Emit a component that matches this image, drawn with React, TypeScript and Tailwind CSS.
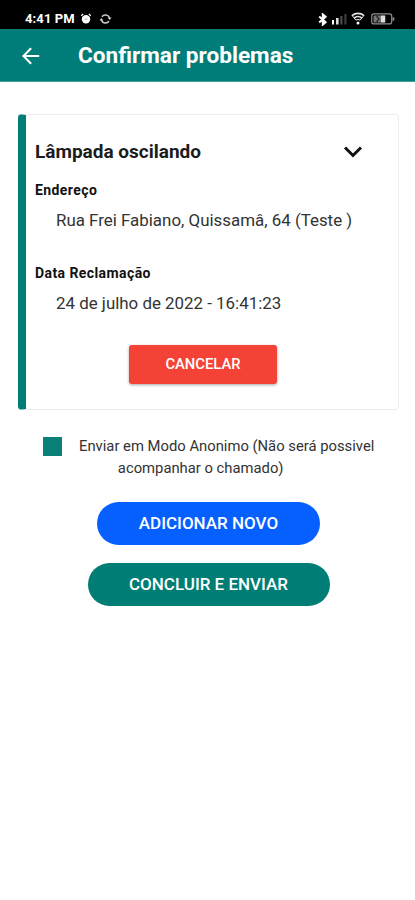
import type { ReactNode } from 'react'

function StatusBar() {
  return (
    <div className="flex h-[29px] items-end justify-between bg-black pr-[20px] pb-[2px] pl-[25px] text-white">
      <div className="flex h-4 items-center">
        <span className="w-[51px] text-[13px] leading-4 font-bold tracking-[0.1px] whitespace-nowrap">4:41 PM</span>
        <svg className="ml-[4px]" width="12" height="12" viewBox="0 0 12 12" fill="none">
          <circle cx="6" cy="6.3" r="4.2" fill="#fff" />
          <path d="M1.2 2.8 3.2 1M10.8 2.8 8.8 1" stroke="#fff" strokeWidth="1.2" />
          <path d="m4.8 5.6 1.1 1.1 1.3-1.3" stroke="#777" strokeWidth=".8" />
        </svg>
        <svg className="ml-[7px]" width="13" height="12" viewBox="0 0 13 12" fill="none" stroke="#ccc" strokeWidth="1.5">
          <path d="M3 3.7A4.3 4.3 0 0 1 10.6 5M10 8.3A4.3 4.3 0 0 1 2.4 7" />
          <path d="M8.6 4.6h4L10.7 7zM.4 7.4h4L2.4 5z" fill="#ccc" stroke="none" />
        </svg>
      </div>
      <div className="flex h-4 items-center">
        <svg width="11" height="13" viewBox="0 0 11 13" fill="none" stroke="#fff" strokeWidth="2">
          <path d="m1.2 3.6 6.400 5.6-2.8 2.4V1.4l2.800 2.400L1.200 9.400" />
        </svg>
        <svg className="ml-[3px]" width="15" height="12" viewBox="0 0 15 12">
          <rect x="0" y="7" width="2" height="4.5" fill="#fff" />
          <rect x="4" y="5" width="2.6" height="6.5" fill="#ddd" />
          <rect x="8.3" y="3" width="2.2" height="8.5" fill="#4b4b4b" />
          <rect x="12.3" y="1" width="2.2" height="10.5" fill="#3b3b3b" />
        </svg>
        <svg className="mb-px ml-[4px]" width="14" height="13" viewBox="0 0 14 13" fill="none" stroke="#e5e5e5" strokeWidth="1.7">
          <path d="M1 3.6C4.5.6 9.5.6 13 3.6" />
          <path d="M3.4 6C5.4 4.2 8.6 4.2 10.6 6" />
          <path d="M1 3.4 5 8.3M13 3.4 9 8.3M5 8.2C6.2 7.2 7.8 7.2 9 8.2" strokeWidth="1" />
          <circle cx="7" cy="11" r="1.5" fill="#fff" stroke="none" />
        </svg>
        <svg className="ml-[6px]" width="24" height="12" viewBox="0 0 24 12" fill="none">
          <rect x=".7" y=".9" width="20" height="10" rx="2.2" stroke="#8c8c8c" strokeWidth="1.2" />
          <rect x="2.5" y="2.6" width="12" height="6.8" rx="1" fill="#757575" />
          <path d="m5.5 3 2.5 3-2.5 3" stroke="#222" strokeWidth="1.2" />
          <rect x="10" y="2.6" width="4" height="6.8" fill="#ddd" />
          <rect x="21.5" y="4.2" width="1.8" height="3.6" rx=".5" fill="#8c8c8c" />
        </svg>
      </div>
    </div>
  )
}

function Header() {
  return (
    <header className="flex h-[53px] items-center border-b border-[#409d98] bg-[#007d79] pt-px pl-[21px] text-white">
      <svg width="19" height="18" viewBox="0 0 19 18" fill="none" stroke="#fff" strokeWidth="2.1">
        <path d="M18.2 9H2.5M10.1 1.3 2.5 9l7.6 7.7" />
      </svg>
      <h1 className="ml-[38px] text-[22.6px] leading-7 font-bold whitespace-nowrap">Confirmar problemas</h1>
    </header>
  )
}

function Field({ label, children }: { label: string; children: ReactNode }) {
  return (
    <div className="h-[83px]">
      <p className="text-[14px] leading-5 font-bold tracking-[0.42px] text-[#111]">{label}</p>
      <p className="mt-[8px] pl-[21px] text-[16.9px] leading-6 whitespace-nowrap text-[#333]">{children}</p>
    </div>
  )
}

export default function App() {
  return (
    <div className="min-h-[900px] w-full bg-white font-['Roboto',sans-serif]">
      <StatusBar />
      <Header />

      <main className="flex flex-col items-center pt-[32px] pl-[2px]">
        <section className="flex h-[296px] w-[381px] flex-col rounded-[4px] border border-l-[8px] border-[#ececec] border-l-[#007d74] pl-[9px]">
          <div className="mt-[23px] flex h-[28px] items-center justify-between pr-[35px]">
            <h2 className="text-[19px] font-bold whitespace-nowrap text-[#1c1c1c]">Lâmpada oscilando</h2>
            <svg width="20" height="14" viewBox="0 0 20 14" fill="none" stroke="#111" strokeWidth="3">
              <path d="m2 2.5 8 8 8-8" />
            </svg>
          </div>
          <div className="mt-[14px]">
            <Field label="Endereço">Rua Frei Fabiano, Quissamâ, 64 (Teste )</Field>
            <Field label="Data Reclamação">24 de julho de 2022 - 16:41:23</Field>
          </div>
          <button className="-mt-px ml-[94px] h-[39px] w-[148px] rounded-[3px] bg-[#f44336] text-[14.8px] font-medium text-white shadow-[0_1px_3px_rgba(0,0,0,0.35)]">
            CANCELAR
          </button>
        </section>

        <label className="mt-[25px] flex w-[331px] items-start">
          <span className="mt-[2px] h-[19px] w-[19px] shrink-0 bg-[#0b8077]"></span>
          <span className="ml-[17px] text-center text-[14.8px] leading-[22px] whitespace-nowrap text-[#333]">
            Enviar em Modo Anonimo (Não será possivel
            <br />
            <span className="pr-[52px]">acompanhar o chamado)</span>
          </span>
        </label>

        <button className="mt-[23px] h-[43px] w-[223px] rounded-full bg-[#0660ff] text-[17px] font-medium text-white">
          ADICIONAR NOVO
        </button>
        <button className="mt-[18px] h-[43px] w-[242px] rounded-full bg-[#007d74] text-[17px] font-medium text-white">
          CONCLUIR E ENVIAR
        </button>
      </main>
    </div>
  )
}
